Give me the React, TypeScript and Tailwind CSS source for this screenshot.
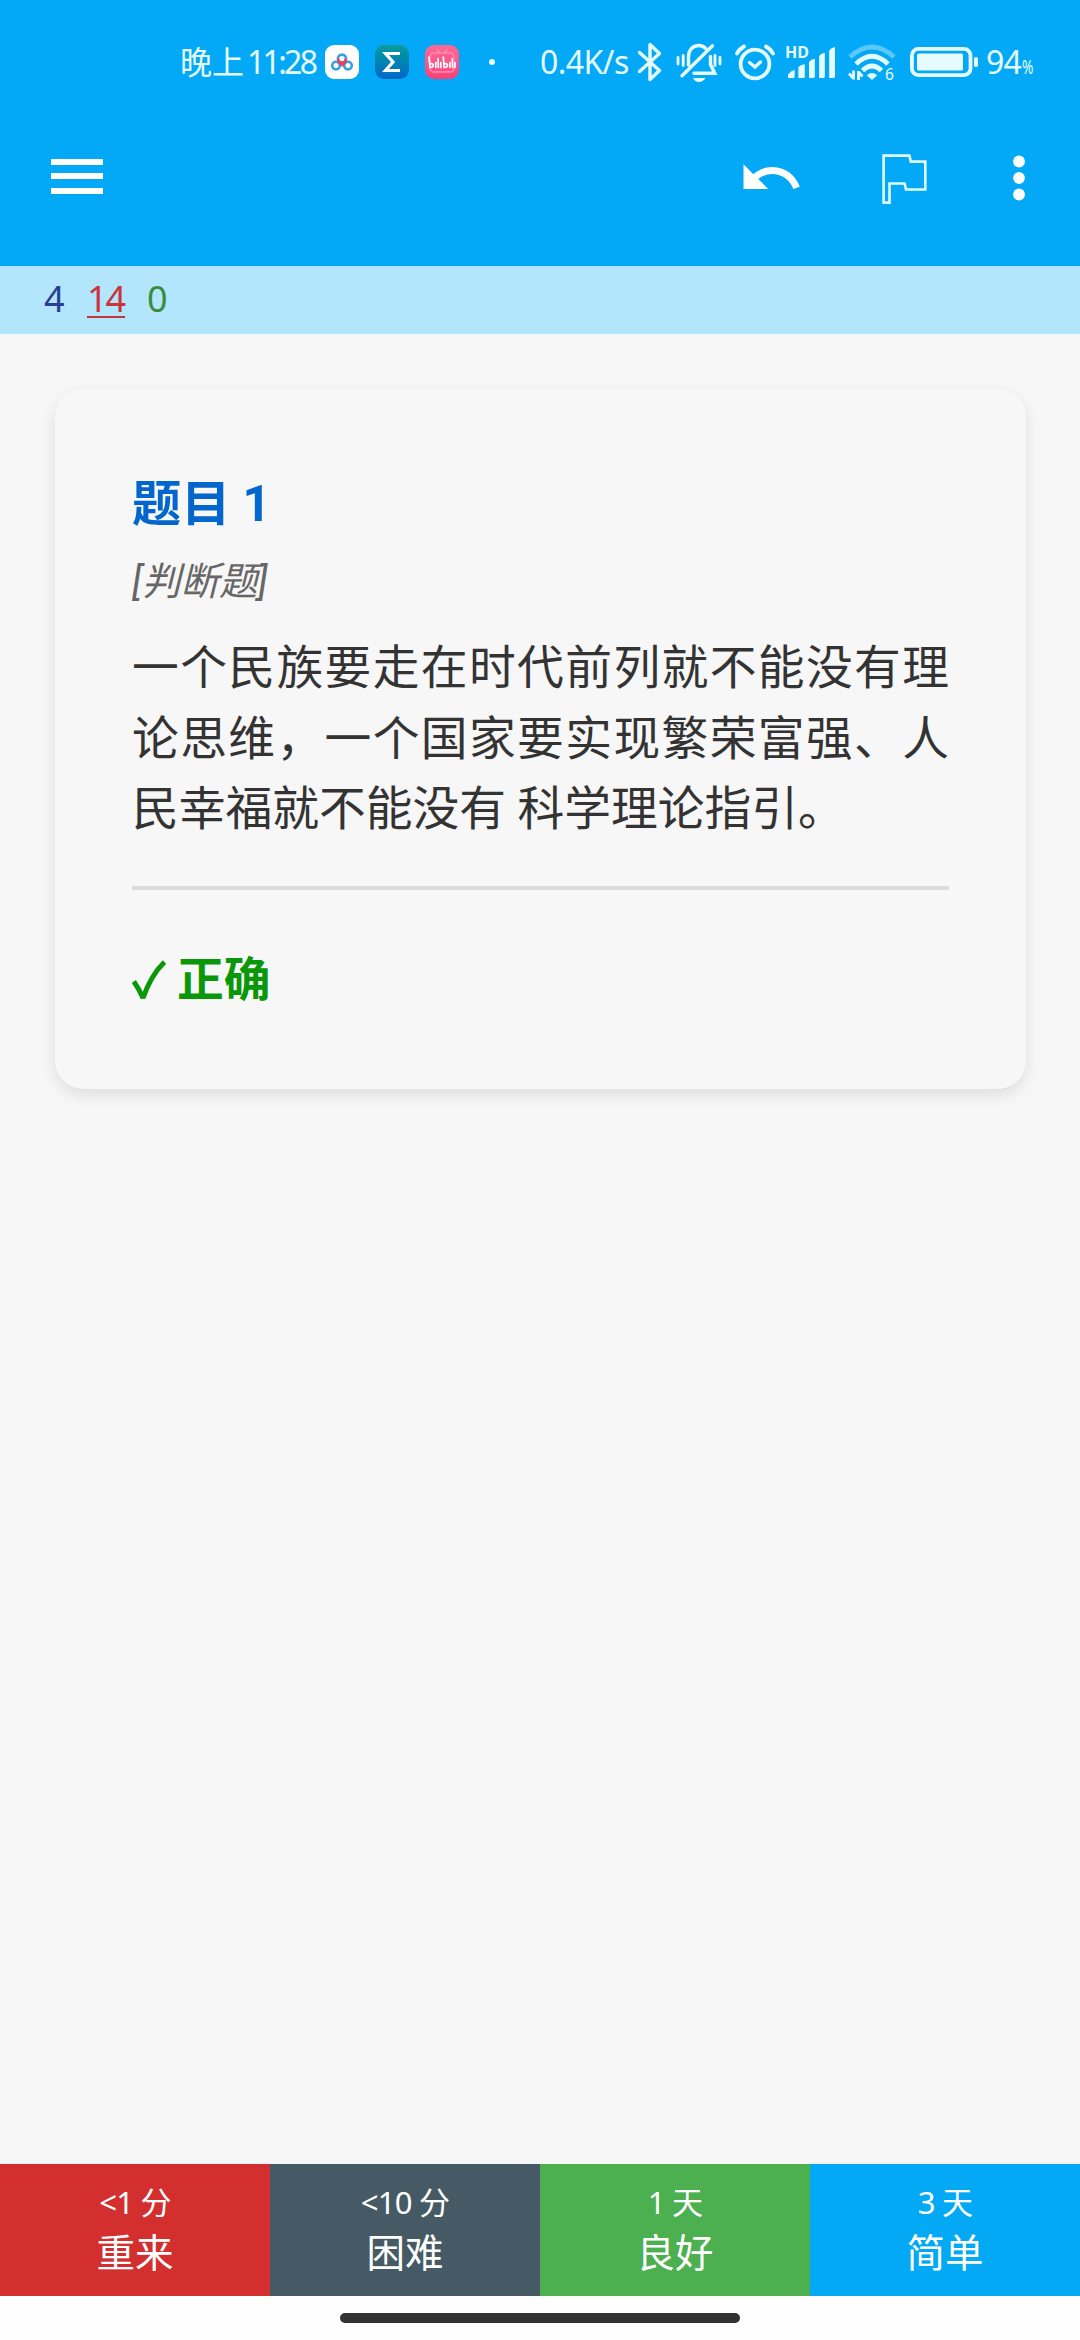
import type { ReactNode } from 'react'

const answers = [
  { id: 'again', time: '<1 分', label: '重来', color: 'bg-[#d32f2f]' },
  { id: 'hard', time: '<10 分', label: '困难', color: 'bg-[#455a64]' },
  { id: 'good', time: '1 天', label: '良好', color: 'bg-[#4caf50]' },
  { id: 'easy', time: '3 天', label: '简单', color: 'bg-[#03a9f4]' },
]

function AppBadge({ className, children }: { className: string; children: ReactNode }) {
  return (
    <span className={`block w-[34px] h-[34px] shrink-0 rounded-[9px] overflow-hidden ${className}`}>
      <svg viewBox="0 0 34 34" className="w-full h-full">
        {children}
      </svg>
    </span>
  )
}

function StatusBar() {
  return (
    <div className="h-[124px] flex items-center pl-[180px] text-[#e6fbff] whitespace-nowrap leading-none">
      <div className="w-[145px] flex items-center text-[32px]">
        <span className="w-[67px]">晚上</span>
        <span className="tracking-[-2.7px]">11:28</span>
      </div>

      {/* Notification icons */}
      <AppBadge className="bg-white">
        <g fill="none" strokeWidth="2.6">
          <circle cx="11" cy="20.6" r="3.8" stroke="#3a9fdd" />
          <circle cx="23" cy="20.6" r="3.8" stroke="#3a9fdd" />
          <circle cx="17" cy="13.6" r="4" stroke="#3a9fdd" />
          <path d="M13 13.6 Q13.2 17.6 17 17.8 Q20.8 17.6 21 13.6 M13.6 17.2 L17 20 L20.4 17.2" stroke="#e8415c" />
        </g>
      </AppBadge>
      <AppBadge className="ml-4 bg-linear-to-b from-[#109a9b] to-[#0568c8]">
        <path d="M25 8.5 H10.5 L18 17 L10.5 25.5 H25" fill="none" stroke="#fff" strokeWidth="3.2" />
      </AppBadge>
      <AppBadge className="ml-4 bg-linear-to-b from-[#fb6a98] to-[#fa4079]">
        <path d="M12 5 L15 8 M22 5 L19 8" stroke="#ff8fb2" strokeWidth="1.6" strokeLinecap="round" />
        <rect x="5" y="8" width="24" height="19" rx="4" fill="none" stroke="#ff7fa6" strokeWidth="1.8" />
        <g fill="none" stroke="#fff" strokeWidth="1.7" strokeLinecap="round">
          <path d="M4 12 L5 22.5 Q8.5 22.5 8.3 20 Q8 18.4 5 18.8 M10.8 17.5 V22.5 M13 13.5 L13.4 22.5 M15.8 17.5 V22.5" />
          <path d="M18.3 12 L19.2 22.5 Q22.7 22.5 22.5 20 Q22.2 18.4 19.2 18.8 M25 17.5 V22.5 M27.2 13.5 L27.6 22.5 M30 17.5 V22.5" />
        </g>
      </AppBadge>
      <span className="ml-[30px] w-1.5 h-1.5 rounded-full bg-current" />

      <span className="ml-[45px] w-[97px] text-[32px] tracking-[-0.6px]">0.4K/s</span>

      {/* Bluetooth */}
      <svg viewBox="0 0 26 40" className="w-[26px] h-10" fill="none" stroke="currentColor" strokeWidth="3.4" strokeLinejoin="round" strokeLinecap="round">
        <path d="M2.5 10.5 L22.5 28.5 L13 37.5 V2.5 L22.5 11.5 L2.5 29.5" />
      </svg>

      {/* Muted bell */}
      <svg viewBox="0 0 46 40" className="ml-[13px] w-[46px] h-10" fill="none" stroke="currentColor" strokeWidth="3.4" strokeLinecap="round">
        <path d="M12.5 23 V15 C12.5 8 17 3.5 22.5 3.5 C26 3.5 28.5 5 30.2 7 M34.5 14.5 V22.5 L38.8 31.3 H18" />
        <path d="M36.5 3.8 L6 33.8" />
        <path d="M2 15.5 V22 M7.2 13.5 V23.5 M39 13.5 V23.5 M44 15.5 V22" strokeWidth="2.8" />
        <path d="M17 36 H29.5 Q27 40 23 40 Q19 40 17 36 Z" fill="currentColor" stroke="none" />
      </svg>

      {/* Alarm */}
      <svg viewBox="0 0 40 40" className="ml-[13px] w-10 h-10" fill="none" stroke="currentColor" strokeLinecap="round">
        <circle cx="20" cy="22" r="14.4" strokeWidth="3.8" />
        <path d="M14.5 20.5 L20 25 L25.5 20" strokeWidth="3.4" />
        <path d="M2 11.5 Q4 7.5 9 4.5 M38 11.5 Q36 7.5 31 4.5" strokeWidth="3.8" />
      </svg>

      {/* Signal */}
      <div className="relative ml-[10px] w-[52px] h-10">
        <span className="absolute left-0 top-[2px] text-[16px] font-bold leading-[16px]">HD</span>
        <svg viewBox="0 0 52 40" className="w-full h-full" fill="currentColor">
          <path d="M3 36 V32.5 Q6 29 9.6 27.8 V34.5 Q9.6 36 8 36 Z" />
          <path d="M13.4 36 V25 Q16 22.5 19.8 22.2 V34.5 Q19.8 36 18 36 Z" />
          <path d="M24 36 V20 Q26 17 29.8 16.8 V34.5 Q29.8 36 28 36 Z" />
          <path d="M34.2 36 V14 Q36 11.2 39.8 10.8 V34.5 Q39.8 36 38 36 Z" />
          <path d="M44.2 36 V8.5 Q46 5.5 50 5 V34.5 Q50 36 48 36 Z" />
        </svg>
      </div>

      {/* Wi-Fi */}
      <div className="relative ml-[11px] w-[50px] h-10">
        <svg viewBox="0 0 50 40" className="w-full h-full" fill="none" stroke="currentColor">
          <path d="M2 15 Q24 -5 46 15" strokeWidth="4.6" opacity="0.4" />
          <path d="M8 22 Q24 6.5 40 22" strokeWidth="4.8" />
          <path d="M14.5 28.5 Q24 19.5 33.5 28.5" strokeWidth="4.8" />
          <path d="M18.8 33.2 Q24 29 29.2 33.2 L24 38 Z" fill="currentColor" stroke="none" />
          <path d="M5.5 28.5 V37.5 M1 31.5 L5.5 36.5 M10.5 38 V29 M10.5 30 L14.5 34.5" strokeWidth="2.8" />
        </svg>
        <span className="absolute left-[37px] top-[23px] text-[15.5px] leading-[18px]">6</span>
      </div>

      {/* Battery */}
      <svg viewBox="0 0 68 30" className="ml-3 w-[68px] h-[30px]" fill="none" stroke="currentColor">
        <rect x="1.9" y="1.9" width="58.6" height="26.2" rx="6.5" strokeWidth="3.8" />
        <rect x="7" y="6.5" width="46" height="17" rx="1.5" fill="currentColor" stroke="none" />
        <rect x="64" y="10" width="4" height="10" rx="1.8" fill="currentColor" stroke="none" />
      </svg>
      <span className="ml-2 flex items-baseline">
        <span className="w-9 text-[32px] tracking-[-0.8px]">94</span>
        <span className="text-[19px] inline-block origin-left scale-x-[0.72]">%</span>
      </span>
    </div>
  )
}

function Toolbar() {
  return (
    <div className="h-[142px] flex pl-[51px] text-white">
      <div className="pt-[35px] flex flex-col gap-[8.7px]">
        <span className="w-[52px] h-[5.8px] bg-white" />
        <span className="w-[52px] h-[5.8px] bg-white" />
        <span className="w-[52px] h-[5.8px] bg-white" />
      </div>
      <svg viewBox="0 0 24 24" className="ml-[634.5px] mt-[21px] w-[66px] h-[66px]" fill="currentColor">
        <path d="M12.5 8c-2.65 0-5.05.99-6.9 2.6L2 7v9h9l-3.62-3.62c1.39-1.16 3.16-1.88 5.12-1.88 3.54 0 6.55 2.31 7.6 5.5l2.37-.78C21.08 11.03 17.15 8 12.5 8z" />
      </svg>
      <svg viewBox="0 0 46 50" className="ml-[78.5px] mt-[30px] w-[46px] h-[50px]" fill="none" stroke="#e0fdff" strokeWidth="2.6">
        <path d="M1.6 1.6 H27.4 L28.8 7.6 H43.3 V35.5 H24 L22.6 29.5 H7.5 V48.6 H1.6 Z" />
      </svg>
      <svg viewBox="0 0 12 46" className="ml-[85px] mt-[31px] w-3 h-[46px]" fill="currentColor">
        <circle cx="6" cy="6.5" r="5.9" />
        <circle cx="6" cy="23" r="5.9" />
        <circle cx="6" cy="39.5" r="5.9" />
      </svg>
    </div>
  )
}

function Card() {
  return (
    <div className="ml-[55px] mr-[54px] mt-[55px] h-[700px] rounded-[28px] bg-[#f7f7f7] px-[77px] pt-[77px] shadow-[0_6px_16px_rgba(0,0,0,0.1)]">
      <h1 className="h-[76px] text-[49.2px] leading-[76px] font-bold text-[#0366cc]">题目 1</h1>
      <div className="mt-2 h-[64px] text-[38.5px] leading-[64px] italic text-[#666]">[判断题]</div>
      <p className="mt-[19px] text-[46.75px] leading-[70.7px] text-justify text-[#333]">
        一个民族要走在时代前列就不能没有理论思维，一个国家要实现繁荣富强、人民幸福就不能没有 科学理论指引。
      </p>
      <div className="mt-[41px] h-1 bg-[#dcdcdc]" />
      <div className="mt-[55px] flex items-center h-[70px] text-[46.75px] font-bold text-[#0a980a]">
        <svg viewBox="0 0 35 40" className="w-[35px] h-10 mr-[10px]" fill="none" stroke="currentColor" strokeWidth="5">
          <path d="M1.8 21.5 Q7 29 11 38 Q19 15 32.5 2" strokeLinejoin="bevel" />
        </svg>
        <span>正确</span>
      </div>
    </div>
  )
}

export default function App() {
  return (
    <div className="w-[1080px] h-[2340px] flex flex-col overflow-hidden bg-[#f7f7f7] font-['Noto_Sans','Noto_Sans_CJK_SC',sans-serif]">
      <header className="bg-[#03a9f7]">
        <StatusBar />
        <Toolbar />
      </header>

      {/* New / learning / review counts */}
      <div className="h-[68px] flex pl-11 pt-[15px] bg-[#b3e5fc] text-[36px] leading-[36px]">
        <span className="w-[43px] text-[#283f94]">4</span>
        <span className="w-[38px] h-[37px] border-b-2 border-[#c5333c] text-[#c9353a] tracking-[-2px]">14</span>
        <span className="ml-[22px] text-[#388e3c]">0</span>
      </div>

      <main className="flex-1 font-['Roboto','Noto_Sans_CJK_SC',sans-serif]">
        <Card />
      </main>

      <div className="h-[132px] grid grid-cols-4 text-white text-center">
        {answers.map((a) => (
          <button key={a.id} type="button" className={`flex flex-col items-center pt-[14px] ${a.color}`}>
            <span className="h-12 text-[31px] leading-[48px] tracking-[-0.8px]">{a.time}</span>
            <span className="h-[52px] text-[38.5px] leading-[52px]">{a.label}</span>
          </button>
        ))}
      </div>
      <div className="h-11 flex justify-center pt-[17px] bg-[#fefefe]">
        <span className="w-[400px] h-[10px] rounded-full bg-[#323232]" />
      </div>
    </div>
  )
}
